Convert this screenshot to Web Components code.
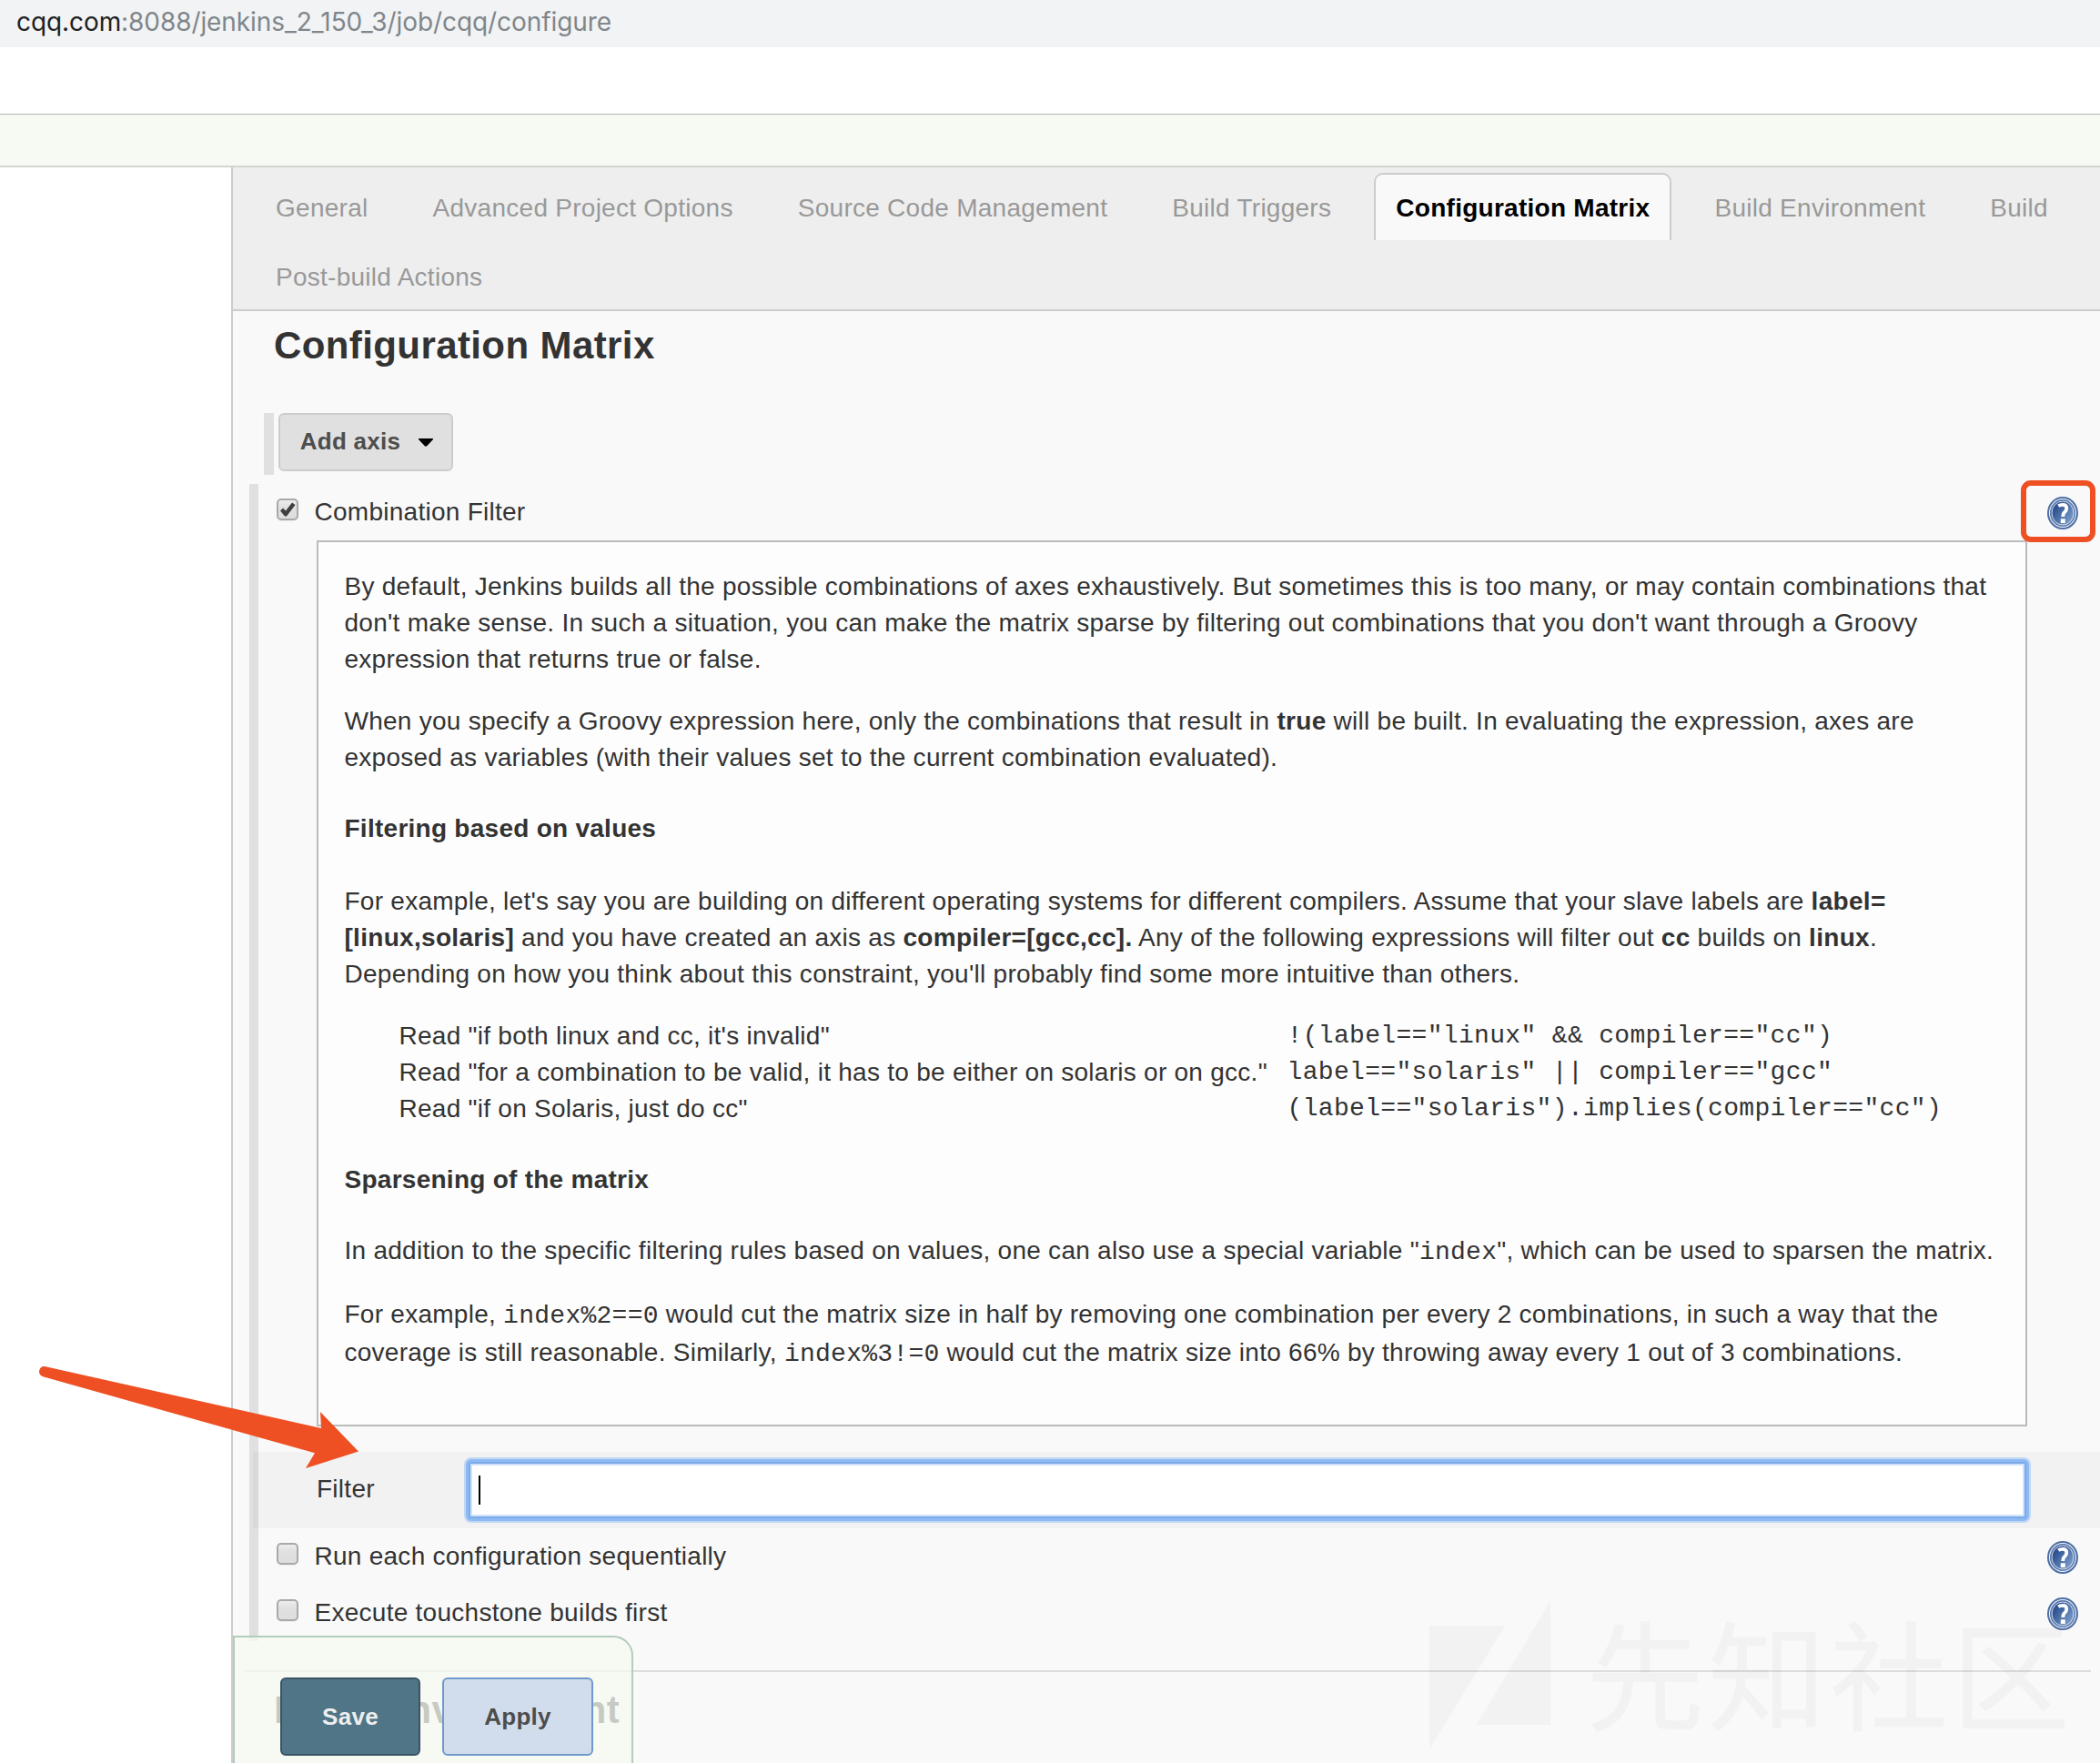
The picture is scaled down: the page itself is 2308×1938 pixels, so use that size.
<!DOCTYPE html>
<html lang="en">
<head>
<meta charset="utf-8">
<title>cqq Config [Jenkins]</title>
<style>
html,body{margin:0;padding:0;background:#fff}
body{width:2308px;height:1938px;overflow:hidden;font:28px/40px "Liberation Sans",Arial,sans-serif;letter-spacing:.264px;color:#333}
</style>
</head>
<body>
<jk-page></jk-page>
<script>
const define = (name, css, html) => customElements.define(name, class extends HTMLElement {
  constructor() {
    super();
    this.attachShadow({ mode: 'open' }).innerHTML = `<style>*{box-sizing:border-box}${css}</style>${html}`;
  }
});

define('jk-url', `:host{display:block;height:52px;background:#f1f3f4;padding:4px 18px 0;font:28px/40px Inter,sans-serif;color:#80868b;white-space:nowrap}
b{font-weight:400;color:#202124}.u{letter-spacing:-.08px}`,
`<span class="u"><b><slot name="host"></slot></b><slot></slot></span>`);

define('jk-header', `:host{display:block}.top{height:73px;background:#fff}.crumbs{height:59px;background:#f6faf2;border-top:1px solid #b3b5b0;border-bottom:2px solid #d3d6cf}`,
`<div class="top"></div><div class="crumbs"></div>`);

define('jk-tab', `:host{display:block;height:76px;padding:6px 12px 0;margin-right:-.9px}
div{height:74px;padding:17px 22px 0;border:2px solid transparent;border-bottom:0;color:#999;white-space:nowrap}
:host([active]) div{font-weight:700;color:#000;background:#f9f9f9;border-color:#ccc;border-radius:10px 10px 0 0}`,
`<div><slot></slot></div>`);

define('jk-tabs', `:host{display:flex;flex-wrap:wrap;align-content:flex-start;height:158px;background:#eee;border-bottom:2px solid #ccc;padding-left:11px}`,
`<slot></slot>`);

define('jk-button', `:host{display:flex;align-items:center;justify-content:center;border:2px solid #ccc;border-radius:6px;background:#e0e0e0;color:#4d4d4d;font-weight:700;font-size:26px;line-height:40px}
:host([kind=menu]){width:192px;height:64px;gap:20px;padding-left:2px}:host([kind=menu]) span{padding-bottom:2px}
:host([kind=save]){width:154px;height:86px;background:#4f7586;border-color:#3a5365;color:#eee}
:host([kind=apply]){width:166px;height:86px;background:#d1ddec;border-color:#6f99cd}
svg{display:none}:host([kind=menu]) svg{display:block}`,
`<span><slot></slot></span><svg width="16" height="9" viewBox="0 0 16 9"><path d="M0 0H16V1L9 8.500H7L0 1Z" fill="#000"/></svg>`);

define('jk-check', `:host{display:block;width:24px;height:24px}svg{display:block;overflow:visible}
.tick{display:none}:host([checked]) .tick{display:block}`,
`<svg width="24" height="24" viewBox="0 0 24 24"><defs><linearGradient id="g" x1="0" y1="0" x2="0" y2="1"><stop offset="0" stop-color="#efefef"/><stop offset=".4" stop-color="#e0e0e0"/><stop offset="1" stop-color="#dedede"/></linearGradient></defs>
<rect x="1" y="2.500" width="22" height="22.500" rx="4" fill="#ececec"/><rect x="1" y="1" width="22" height="22" rx="4" fill="url(#g)" stroke="#a9a9a9" stroke-width="2"/>
<path class="tick" d="M4 13.500L7 10.500L10 13.500L17 4.500L20.500 7L11 19.500H9Z" fill="#3f3f3f"/></svg>`);

define('jk-help-icon', `:host{display:block;width:34px;height:36px}svg{display:block}`,
`<svg width="34" height="36" viewBox="0 0 34 36"><defs><linearGradient id="h" x1="0" y1="0.200" x2="1" y2="1"><stop offset=".15" stop-color="#2c4f8e"/><stop offset="1" stop-color="#8cb0da"/></linearGradient></defs>
<ellipse cx="17" cy="18" rx="16" ry="17" fill="#f4f7fb" stroke="#4d6ea6" stroke-width="2"/>
<ellipse cx="17" cy="18" rx="13.300" ry="14.300" fill="url(#h)" stroke="#5f7cae" stroke-width="1.500"/><ellipse cx="17" cy="18" rx="12" ry="13" fill="none" stroke="#d4ddec" stroke-width="1"/>
<path d="M12.300 10.300Q14 8.900 17 8.900Q21.300 8.900 21.300 12.800Q21.300 15.300 19 17.200Q17.300 18.500 17.300 22" fill="none" stroke="#fff" stroke-width="3.800"/><rect x="14.800" y="24.300" width="5" height="4.700" fill="#fff"/></svg>`);

define('jk-option', `:host{display:flex;height:62px;padding:0 24px 0 48px;align-items:flex-start}
jk-check{margin-top:16px}.label{flex:1;padding:11px 0 0 17.500px}jk-help-icon{margin-top:14px}`,
`<jk-check></jk-check><div class="label"><slot></slot></div><jk-help-icon></jk-help-icon>`);

define('jk-help-text', `:host{display:block;width:1880px;height:974px;margin-left:92px;border:2px solid #bbb;background:#fdfdfd;padding:29px 0 0 28.500px}
p{margin:0 0 28px;white-space:nowrap}h4{margin:0;font-size:28px;line-height:40px}b{letter-spacing:.3px}
.h1{margin:38px 0 40px}.h2{margin:38px 0 38px}code{font:28px/1px "Liberation Mono",monospace}
table{border-spacing:0;margin:0 0 0 60px}td{padding:0;height:40px;line-height:40px;white-space:nowrap}td:first-child{width:976px}td code{display:block;height:40px;line-height:40px;letter-spacing:.33px}
.idx{margin-bottom:29px}.last{line-height:42px}`,
`<p>By default, Jenkins builds all the possible combinations of axes exhaustively. But sometimes this is too many, or may contain combinations that<br>don't make sense. In such a situation, you can make the matrix sparse by filtering out combinations that you don't want through a Groovy<br>expression that returns true or false.</p>
<p>When you specify a Groovy expression here, only the combinations that result in <b>true</b> will be built. In evaluating the expression, axes are<br>exposed as variables (with their values set to the current combination evaluated).</p>
<h4 class="h1">Filtering based on values</h4>
<p>For example, let's say you are building on different operating systems for different compilers. Assume that your slave labels are <b>label=<br>[linux,solaris]</b> and you have created an axis as <b>compiler=[gcc,cc].</b> Any of the following expressions will filter out <b>cc</b> builds on <b>linux</b>.<br>Depending on how you think about this constraint, you'll probably find some more intuitive than others.</p>
<table><tr><td>Read "if both linux and cc, it's invalid"</td><td><code>!(label=="linux" &amp;&amp; compiler=="cc")</code></td></tr>
<tr><td>Read "for a combination to be valid, it has to be either on solaris or on gcc."</td><td><code>label=="solaris" || compiler=="gcc"</code></td></tr>
<tr><td>Read "if on Solaris, just do cc"</td><td><code>(label=="solaris").implies(compiler=="cc")</code></td></tr></table>
<h4 class="h2">Sparsening of the matrix</h4>
<p class="idx">In addition to the specific filtering rules based on values, one can also use a special variable "<code>index</code>", which can be used to sparsen the matrix.</p>
<p class="last">For example, <code>index%2==0</code> would cut the matrix size in half by removing one combination per every 2 combinations, in such a way that the<br>coverage is still reasonable. Similarly, <code>index%3!=0</code> would cut the matrix size into 66% by throwing away every 1 out of 3 combinations.</p>`);

define('jk-filter', `:host{display:flex;height:84px;margin:28px 0 0 22px;background:rgba(0,0,0,.026)}
.name{width:237px;padding:21px 0 0 70px}
.field{width:1712px;height:62px;margin:11px 0 0 0;background:#fff;border:2px solid #7ca9e8;border-radius:3px;box-shadow:0 0 0 3px #8ebaf4,0 0 0 5px #c2d8f5,inset 0 0 0 2px #d0e2fa;padding:13px 0 0 9px}
i{display:block;width:2px;height:32px;background:#000}`,
`<div class="name"><slot></slot></div><div class="field"><i></i></div>`);

define('jk-mark', `:host{position:absolute;left:1571px;top:1760px;display:flex;opacity:.024;color:#000}
svg{display:block}span{font:130px/164px "Noto Sans CJK SC",sans-serif;letter-spacing:4px;margin:-7px 0 0 38px;white-space:nowrap;-webkit-text-stroke:.500px #000}`,
`<svg width="134" height="164" viewBox="0 0 134 164"><path d="M0 27H83L0 163ZM133 0V136H52Z"/></svg><span><slot></slot></span>`);

define('jk-notes', `:host{position:absolute;left:0;top:1490px;pointer-events:none}svg{display:block}
.box{position:absolute;left:2221px;top:-962px;width:82px;height:68px;border:6px solid #ee5024;border-radius:11px}`,
`<svg width="420" height="140" viewBox="0 1490 420 140"><path d="M49 1502L353 1570L352 1552L394 1595.500L336 1614L346 1597.300L48 1513.500Q43 1512 43 1507.500Q44 1501.500 49 1502Z" fill="#ee5024"/></svg><div class="box"></div>`);

define('jk-actions', `:host{position:absolute;left:256px;top:1798px;width:440px;height:160px;display:flex;gap:24px;padding:44px 0 0 50px;align-items:flex-start;border:2px solid #b3ccbc;border-radius:0 22px 0 0;background:rgba(246,250,241,.76)}`,
`<jk-button kind="save">Save</jk-button><jk-button kind="apply">Apply</jk-button>`);

define('jk-config', `:host{display:block;margin-left:254px;height:1754px;border-left:2px solid #ccc;background:#f9f9f9;overflow:hidden}
h2{margin:0;font-size:42px;letter-spacing:.4px;line-height:48px;padding:14px 0 0 45px;height:112px}
.axis{display:flex;gap:5px;height:68px;margin-left:34px}.axis i{width:11px;background:#e0e0e0}
.group{margin-top:10px;height:1272px;position:relative;background:linear-gradient(#e0e0e0,#e0e0e0) 18px 0/10px 100% no-repeat}
hr{margin:32px 10px 0 12px;border:0;height:2px;background:#ddd}h2.next{padding-top:18px}`,
`<jk-tabs><jk-tab>General</jk-tab><jk-tab>Advanced Project Options</jk-tab><jk-tab>Source Code Management</jk-tab><jk-tab>Build Triggers</jk-tab><jk-tab active>Configuration Matrix</jk-tab><jk-tab>Build Environment</jk-tab><jk-tab>Build</jk-tab><jk-tab>Post-build Actions</jk-tab></jk-tabs>
<h2>Configuration Matrix</h2>
<div class="axis"><i></i><jk-button kind="menu">Add axis</jk-button></div>
<div class="group"><jk-option id="cf">Combination Filter</jk-option><jk-help-text></jk-help-text><jk-filter>Filter</jk-filter><jk-option>Run each configuration sequentially</jk-option><jk-option>Execute touchstone builds first</jk-option></div>
<hr><h2 class="next">Build Environment</h2>`);

define('jk-page', `:host{display:block;position:relative;width:2308px;height:1938px;overflow:hidden}`,
`<jk-url><span slot="host">cqq.com</span>:8088/jenkins_2_150_3/job/cqq/configure</jk-url><jk-header></jk-header><jk-config></jk-config><jk-mark>先知社区</jk-mark><jk-actions></jk-actions><jk-notes></jk-notes>`);

document.querySelector('jk-page').shadowRoot.querySelector('jk-config').shadowRoot.getElementById('cf').shadowRoot.querySelector('jk-check').setAttribute('checked', '');
</script>
</body>
</html>
